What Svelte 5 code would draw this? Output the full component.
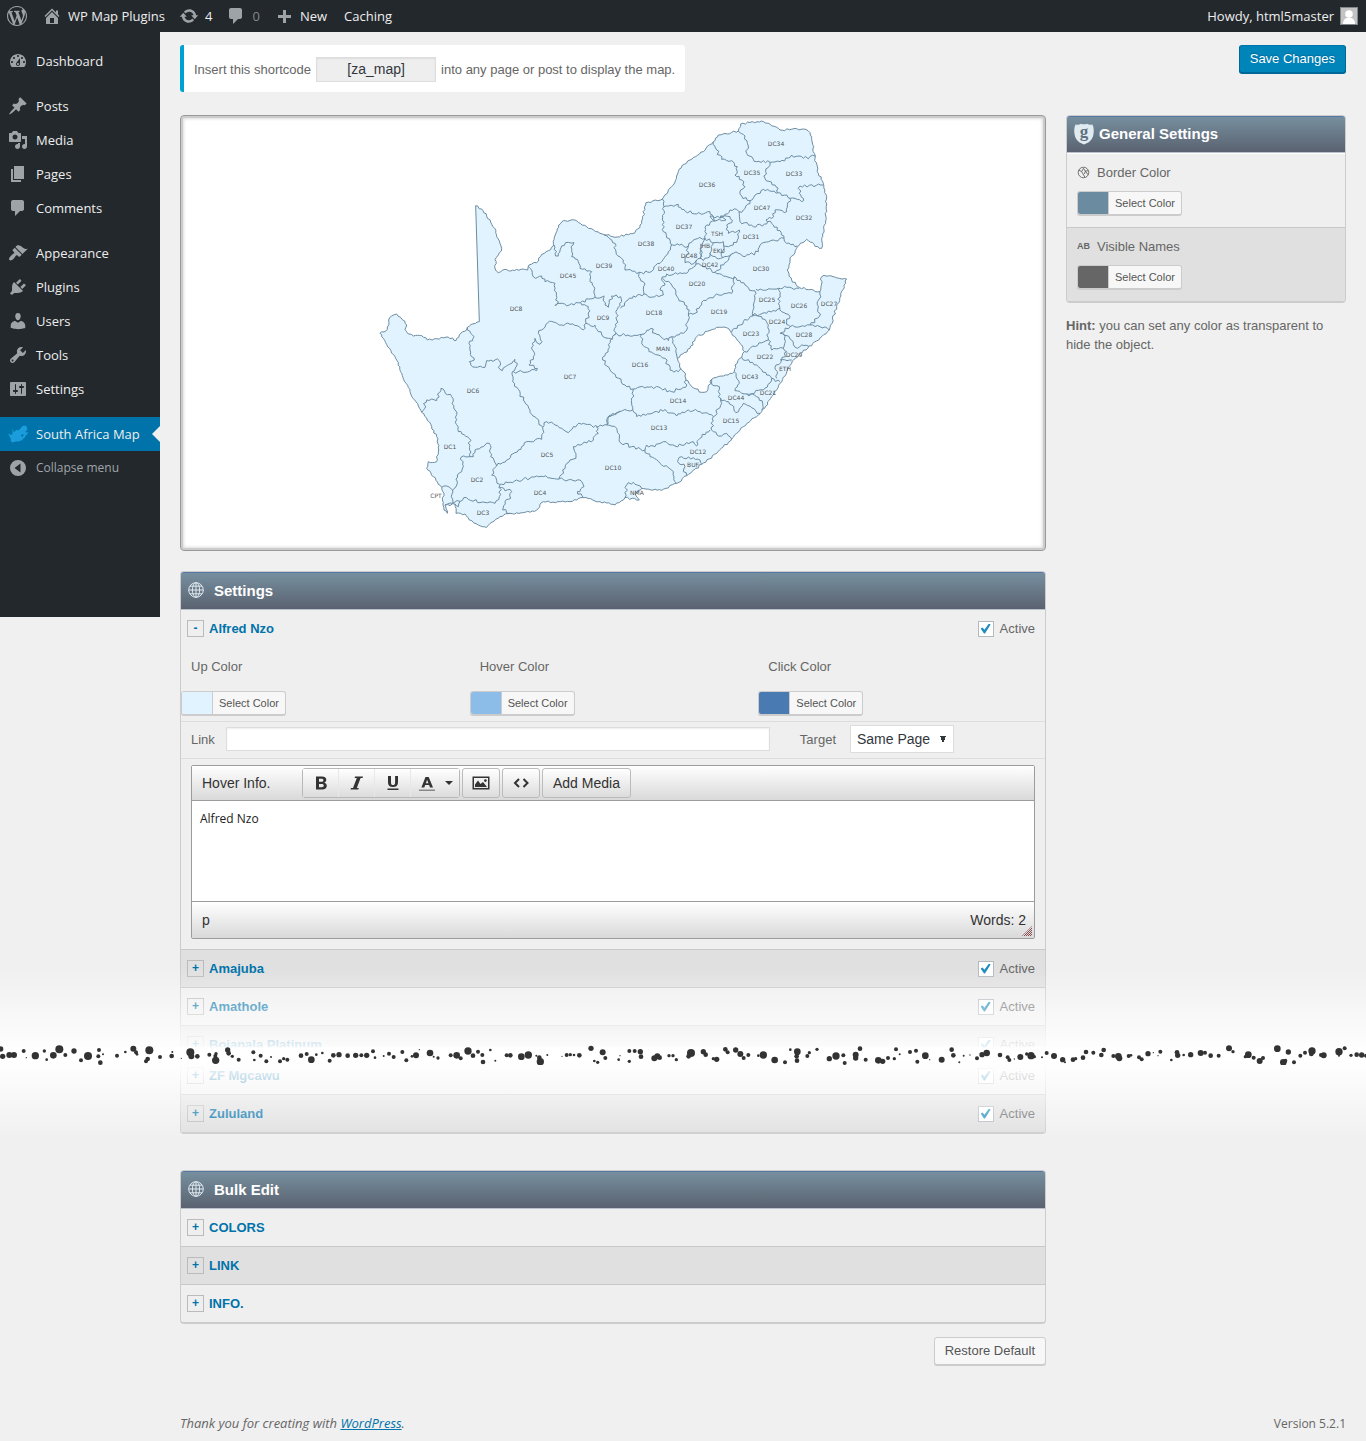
<script>
	const menu = [
		{
			label: 'Dashboard',
			icon: 'M3.76 16h12.48c1.1-1.37 1.76-3.11 1.76-5 0-4.42-3.58-8-8-8s-8 3.58-8 8c0 1.89.66 3.63 1.76 5zM10 4c.55 0 1 .45 1 1s-.45 1-1 1-1-.45-1-1 .45-1 1-1zM6 6c.55 0 1 .45 1 1s-.45 1-1 1-1-.45-1-1 .45-1 1-1zm8 0c.55 0 1 .45 1 1s-.45 1-1 1-1-.45-1-1 .45-1 1-1zm-5.37 5.55L12 7v6c0 1.1-.9 2-2 2s-2-.9-2-2c0-.57.24-1.08.63-1.45zM4 10c.55 0 1 .45 1 1s-.45 1-1 1-1-.45-1-1 .45-1 1-1zm12 0c.55 0 1 .45 1 1s-.45 1-1 1-1-.45-1-1 .45-1 1-1zm-5 3c0-.55-.45-1-1-1s-1 .45-1 1 .45 1 1 1 1-.45 1-1z'
		},
		{
			label: 'Posts',
			gap: true,
			icon: 'M10.44 3.02l1.82-1.82 6.36 6.35-1.83 1.82c-1.05-.68-2.48-.57-3.41.36l-.75.75c-.92.93-1.04 2.35-.35 3.41l-1.83 1.82-2.41-2.41-2.8 2.79c-.42.42-3.38 2.71-3.8 2.29s1.86-3.39 2.28-3.81l2.79-2.79L4.1 9.36l1.83-1.82c1.05.69 2.48.57 3.4-.36l.75-.75c.93-.92 1.05-2.35.36-3.41z'
		},
		{
			label: 'Media',
			icon: 'M13 11V4c0-.55-.45-1-1-1h-1.67L9 1H5L3.67 3H2c-.55 0-1 .45-1 1v7c0 .55.45 1 1 1h10c.55 0 1-.45 1-1zM7 4.5c1.38 0 2.5 1.12 2.5 2.5S8.38 9.5 7 9.5 4.5 8.38 4.5 7 5.62 4.5 7 4.5zM14 6h5v10.5c0 1.38-1.12 2.5-2.5 2.5S14 17.88 14 16.5s1.12-2.5 2.5-2.5c.17 0 .34.02.5.05V9h-3V6zm-4 8.05V13h2v3.5c0 1.38-1.12 2.5-2.5 2.5S7 17.88 7 16.5 8.12 14 9.5 14c.17 0 .34.02.5.05z'
		},
		{ label: 'Pages', icon: 'M6 15V2h10v13H6zm-1 1h8v2H3V5h2v11z' },
		{
			label: 'Comments',
			icon: 'M5 2h9c1.1 0 2 .9 2 2v7c0 1.1-.9 2-2 2h-2l-5 5v-5H5c-1.1 0-2-.9-2-2V4c0-1.1.9-2 2-2z'
		},
		{
			label: 'Appearance',
			gap: true,
			icon: 'M14.48 11.06L7.41 3.99l1.5-1.5c.5-.56 2.3-.47 3.51.32 1.21.8 1.43 1.28 2.91 2.1 1.18.64 2.45 1.26 4.45.85zm-.71.71L6.7 4.7 4.93 6.47c-.39.39-.39 1.02 0 1.41l1.06 1.06c.39.39.39 1.03 0 1.42-.6.6-1.43 1.11-2.21 1.69-.35.26-.7.53-1.01.84C1.43 14.23.4 16.08 1.4 17.07c.99 1 2.84-.03 4.18-1.36.31-.31.58-.66.85-1.02.57-.78 1.08-1.61 1.69-2.21.39-.39 1.02-.39 1.41 0l1.06 1.06c.39.39 1.02.39 1.41 0z'
		},
		{
			label: 'Plugins',
			icon: 'M13.11 4.36L9.87 7.6 8 5.73l3.24-3.24c.35-.34 1.05-.2 1.56.32.52.51.66 1.21.31 1.55zm-8 1.77l.91-1.12 9.01 9.01-1.19.84c-.71.71-2.63 1.16-3.82 1.16H6.14L4.9 17.26c-.59.59-1.54.59-2.12 0-.59-.58-.59-1.53 0-2.12l1.24-1.24v-3.88c0-1.13.4-3.19 1.09-3.89zm7.26 3.97l3.24-3.24c.34-.35 1.04-.21 1.55.31.52.51.66 1.21.31 1.55l-3.24 3.25z'
		},
		{
			label: 'Users',
			icon: 'M10 9.25c-2.27 0-2.73-3.44-2.73-3.44C7 4.02 7.82 2 9.97 2c2.16 0 2.98 2.02 2.71 3.81 0 0-.41 3.44-2.68 3.44zm0 2.57L12.72 10c2.39 0 4.52 2.33 4.52 4.53v2.49s-3.65 1.13-7.24 1.13c-3.65 0-7.24-1.13-7.24-1.13v-2.49c0-2.25 1.94-4.48 4.47-4.48z'
		},
		{
			label: 'Tools',
			icon: 'M16.68 9.77c-1.34 1.34-3.3 1.67-4.95.99l-5.41 6.52c-.99.99-2.59.99-3.58 0s-.99-2.59 0-3.57l6.52-5.42c-.68-1.65-.35-3.61.99-4.95 1.28-1.28 3.12-1.62 4.72-1.06l-2.89 2.89 2.82 2.82 2.86-2.87c.53 1.58.18 3.39-1.08 4.65zM3.81 16.21c.4.39 1.04.39 1.43 0 .4-.4.4-1.04 0-1.43-.39-.4-1.03-.4-1.43 0-.39.39-.39 1.03 0 1.43z'
		},
		{
			label: 'Settings',
			icon: 'M18 16V4c0-.55-.45-1-1-1H3c-.55 0-1 .45-1 1v12c0 .55.45 1 1 1h14c.55 0 1-.45 1-1zM8 11h1c.55 0 1 .45 1 1s-.45 1-1 1H8v1.5c0 .28-.22.5-.5.5s-.5-.22-.5-.5V13H6c-.55 0-1-.45-1-1s.45-1 1-1h1V5.5c0-.28.22-.5.5-.5s.5.22.5.5V11zm5-2h-1c-.55 0-1-.45-1-1s.45-1 1-1h1V5.5c0-.28.22-.5.5-.5s.5.22.5.5V7h1c.55 0 1 .45 1 1s-.45 1-1 1h-1v5.5c0 .28-.22.5-.5.5s-.5-.22-.5-.5V9z'
		}
	];

	const icons = {
		wordpress:
			'M20 10c0-5.51-4.49-10-10-10C4.48 0 0 4.49 0 10c0 5.52 4.48 10 10 10 5.51 0 10-4.48 10-10zM7.78 15.37L4.37 6.22c.55-.02 1.17-.08 1.17-.08.5-.06.44-1.13-.06-1.11 0 0-1.45.11-2.37.11-.18 0-.37 0-.58-.01C4.12 2.69 6.87 1.11 10 1.11c2.33 0 4.45.87 6.05 2.34-.68-.11-1.65.39-1.65 1.58 0 .74.45 1.36.9 2.1.35.61.55 1.36.55 2.46 0 1.49-1.4 5-1.4 5l-3.03-8.37c.54-.02.82-.17.82-.17.5-.05.44-1.25-.06-1.22 0 0-1.44.12-2.38.12-.87 0-2.33-.12-2.33-.12-.5-.03-.56 1.2-.06 1.22l.92.08 1.26 3.41zM17.41 10c.24-.64.74-1.87.43-4.25.7 1.29 1.05 2.71 1.05 4.25 0 3.29-1.73 6.24-4.4 7.78.97-2.59 1.94-5.2 2.92-7.78zM6.1 18.09C3.12 16.65 1.11 13.53 1.11 10c0-1.3.23-2.48.72-3.59C3.25 10.3 4.67 14.2 6.1 18.09zm4.03-6.63l2.58 6.98c-.86.29-1.76.45-2.71.45-.79 0-1.57-.11-2.29-.33.81-2.38 1.62-4.74 2.42-7.1z',
		home: 'M16 8.5l1.53 1.53-1.06 1.06L10 4.6l-6.47 6.49-1.06-1.06L10 2.5l4 4v-2h2v4zm-6-2.46l6 5.99V18H4v-5.97zM12 17v-5H8v5h4z',
		update:
			'M10.2 3.28c3.53 0 6.43 2.61 6.92 6h2.08l-3.5 4-3.5-4h2.32c-.45-1.97-2.21-3.45-4.32-3.45-1.45 0-2.73.71-3.54 1.78L4.95 5.66C6.23 4.2 8.11 3.28 10.2 3.28zm-.4 13.44c-3.52 0-6.43-2.61-6.92-6H.8l3.5-4c1.17 1.33 2.33 2.67 3.5 4H5.48c.45 1.97 2.21 3.45 4.32 3.45 1.45 0 2.73-.71 3.54-1.78l1.71 1.95c-1.28 1.46-3.15 2.38-5.25 2.38z',
		comment:
			'M5 2h9c1.1 0 2 .9 2 2v7c0 1.1-.9 2-2 2h-2l-5 5v-5H5c-1.1 0-2-.9-2-2V4c0-1.1.9-2 2-2z',
		plus: 'M17 9v3h-5v5H9v-5H4V9h5V4h3v5z',
		collapse: 'M10 2a8 8 0 1 0 0 16 8 8 0 0 0 0-16zM12.5 5.500v9L6.500 10z'
	};

	// The map is digitised in four sheets, three units to a pixel
	const sheets = { nw: [0, 240], ne: [690, 0], sw: [0, 720], se: [690, 480] };

	const parse = (text, [dx, dy] = [0, 0]) =>
		text.split(' ').map((pair) => {
			const [x, y] = pair.split(',').map(Number);
			return [x + dx, y + dy];
		});

	const noise = (x, y) => {
		const n = Math.sin(x * 12.9898 + y * 78.233) * 43758.5453;
		return (n - Math.floor(n)) * 2 - 1;
	};

	// Breaks long segments up so that borders look surveyed rather than ruled
	function trace(points, amount) {
		let d = 'M' + points[0].join(' ');
		for (let i = 1; i < points.length; i++) {
			const [x1, y1] = points[i - 1];
			const [x2, y2] = points[i];
			const length = Math.hypot(x2 - x1, y2 - y1);
			const steps = Math.max(1, Math.round(length / 7));
			// Surveyed straight lines stay straight
			const rough = length > 200 ? 0 : amount;
			for (let s = 1; s < steps; s++) {
				const t = s / steps;
				const off = noise(x1 + s * 7, y2 + s * 3) * rough;
				const x = x1 + (x2 - x1) * t - ((y2 - y1) / length) * off;
				const y = y1 + (y2 - y1) * t + ((x2 - x1) / length) * off;
				d += `L${x.toFixed(1)} ${y.toFixed(1)}`;
			}
			d += `L${x2} ${y2}`;
		}
		return d;
	}

	const northCoast =
		'30,670 52,658 56,630 65,618 80,612 92,622 104,633 110,645 105,658 115,672 130,678 155,677 172,690 200,686 235,681 258,692 268,675 290,660 292,652 328,635';
	const outline =
		'317,287 335,297 350,318 374,355 380,380 390,400 395,415 385,435 375,448 377,480 385,488 405,478 415,482 440,478 473,480 477,465 500,458 515,433 535,422 550,408 556,375 566,345 580,332 620,332 650,350 690,370 710,375 735,382 795,368 815,340 828,278 877,267 910,225 927,178 960,150 1000,125 1030,95 1045,75 1105,63 1112,42 1175,33 1230,60 1300,57 1320,68 1335,145 1345,190 1360,220 1370,260 1367,340 1355,385 1355,415 1348,415 1310,388 1282,410 1260,450 1252,480 1265,510 1288,532 1350,545 1355,500 1362,496 1430,507 1400,590 1378,660 1340,693 1290,730 1265,760 1230,820 1210,855 1175,905 1120,950 1085,987 1040,1030 995,1063 950,1097 920,1120 875,1141 815,1135 795,1150 808,1170 765,1163 735,1185 690,1175 640,1163 600,1175 520,1175 500,1200 460,1208 420,1210 390,1220 350,1252 325,1245 298,1230 285,1212 258,1210 255,1182 225,1185 232,1210 222,1200 217,1170 222,1150 215,1132 190,1100 170,1075 175,1055 200,1055 206,1020 200,980 185,950 155,907 120,845 95,790 75,740 40,685 30,670';
	const lesotho =
		'232,265 270,235 290,200 350,172 380,173 395,190 425,225 433,245 425,262 405,285 403,305 370,318 335,328 320,365 305,367 275,350 258,330 257,312 245,300 235,275 232,265';

	const country =
		trace(parse(northCoast), 3) +
		trace(parse(outline), 3).replace('M', 'L') +
		'Z' +
		trace(parse(lesotho, sheets.se), 3) +
		'Z';

	const borders = {
		nw: [
			'292,412 302,430 312,440 297,460 300,480 313,510 298,515 302,525 345,532 350,512 375,510 388,512',
			'477,525 490,500 487,460 495,445 510,463 516,455 505,430 538,394 575,405 600,403 640,420 648,400',
			'475,230 497,265 515,258 525,275 555,280 557,330 565,335 555,347 570,340 598,345 632,338',
			'552,165 557,198 565,198 575,168 595,157 612,158 603,170 605,200 625,215 630,235 665,245 660,275 672,290 675,322',
			'632,338 675,322 703,318',
			'632,338 655,350 655,375 648,400 670,410 675,405 685,425 715,445 728,448'
		],
		ne: [
			'12,375 45,400 48,425 70,450 75,480 118,487 150,487 180,460 205,425 215,405',
			'118,487 120,505 130,515 132,552',
			'187,267 192,290 187,330 190,365 218,405 265,408 285,388 315,385',
			'192,290 235,283 245,298 290,312 330,305 345,333 320,345 315,385 305,410 300,445 290,450 288,462',
			'265,408 262,435 255,458 280,462 290,450',
			'340,95 350,120 365,148 395,152 412,170 405,195 425,210 435,230 422,240 425,258 450,272',
			'415,63 435,78 442,100 440,130 470,155 510,157 540,155 575,135 610,145 645,138',
			'510,157 497,185 495,205 525,225 535,248 570,265 605,275 610,265 598,250 600,228 670,225',
			'450,272 490,238 535,248',
			'450,272 430,300 417,305 420,335 460,350 500,342 498,330 520,345 540,362 552,385 560,400 592,408',
			'570,265 560,305 525,300 515,325 498,330',
			'552,385 520,390 485,400 475,425 435,440 415,430 395,432 380,455 345,487',
			'345,333 330,318 360,325 390,300 410,298 417,305',
			'345,333 378,330 360,322 390,320 395,338 380,345 385,370 418,360 415,385 400,405 370,408',
			'315,385 345,398 370,395 368,443 395,432',
			'340,398 330,430 350,445 368,443',
			'303,420 300,445 310,452 330,440 330,430',
			'288,462 310,470 345,487 370,498 405,503',
			'288,462 260,490 200,492 185,510 195,525 180,540 190,555 150,562 132,552'
		],
		sw: [
			'388,32 390,58 397,62 435,28 440,48 427,65 428,95 445,118 460,150 480,180 500,205 518,232',
			'430,65 500,62 502,55 477,45',
			'518,232 530,215 555,225 575,235 595,248 610,230 640,220 670,232 712,225 740,235 748,275',
			'712,225 715,200 750,183',
			'678,230 685,250 670,270 610,290 618,325 600,330 567,387',
			'518,232 515,268 470,275 445,300 410,330 380,348 362,320 358,280 345,285 315,300 310,320 300,320',
			'155,187 170,150 200,152 213,115 245,140 255,180 265,245 298,265 300,320',
			'300,320 275,320 275,365 262,375 262,400 248,420 248,460',
			'215,412 230,408 248,420',
			'225,465 248,460 290,443 330,458 375,460 388,440 390,405',
			'255,462 265,470 270,455',
			'380,348 365,375 388,403 440,390 520,380 567,387 630,390 642,410 622,425 640,443',
			'388,412 425,425 422,445 405,455 398,480 420,490'
		],
		se: [
			'13,80 15,105 25,112 35,78 62,80 65,95 52,118 50,150 43,195 38,205',
			'62,115 100,78 132,72',
			'188,25 215,45 235,85 268,120 265,135',
			'265,135 285,130 305,97 350,72 395,70 403,20 435,45 468,70 460,105 458,138',
			'265,135 260,180 230,195 215,200 205,212 165,190 152,175 125,193 43,195',
			'125,193 125,220 160,250 195,265 210,300 235,305 243,295',
			'215,200 225,230 230,255 232,265',
			'38,205 8,270 40,310 75,345 100,357 155,350 215,365 257,352 258,330',
			'100,357 98,420 60,425 25,440 22,465',
			'98,420 110,440 150,432 195,418 230,438 265,420 300,425 340,440',
			'335,328 335,343 358,350 355,380 365,400 340,440 335,480 365,498 380,490 395,507',
			'362,385 395,405 408,428 430,400 480,430',
			'403,305 418,340 405,362 425,370 440,372 470,380 488,400 485,420',
			'440,372 490,360 515,325',
			'425,262 470,285 500,315 515,325 540,335',
			'433,245 505,210 505,165 485,140 458,138 430,155 395,187',
			'505,210 515,240 550,235 560,245 545,270 528,285 530,325',
			'540,270 575,270',
			'550,190 575,210 592,235 605,225 625,228',
			'468,58 500,60 535,55 560,52 598,55',
			'458,135 500,130 540,115',
			'535,55 540,75 535,100 545,125 570,140 560,155 570,170 540,190 555,200 550,235',
			'570,170 600,170 630,165 660,170 688,180',
			'660,65 655,110 658,140 630,165',
			'58,515 95,530 135,540 140,525 165,530 190,515 225,528 280,515 290,528 300,505 330,480',
			'135,540 150,560 180,580 215,600 230,640',
			'305,583 300,570 245,560 233,575 255,590 250,605 260,617',
			'75,683 80,645 100,637 125,655'
		]
	};

	const borderPath = Object.entries(borders)
		.flatMap(([sheet, lines]) => lines.map((line) => trace(parse(line, sheets[sheet]), 5)))
		.join('');

	const districts = `DC34 406 34,DC35 382 63,DC33 424 64,DC36 337 75,DC47 392 98,DC32 434 108,DC37 314 117,TSH 347 124,DC31 381 127,JHB 335 136,EKU 349 141,DC38 276 134,DC48 319 146,DC42 340 155,DC39 234 156,DC40 296 159,DC30 391 159,DC45 198 166,DC20 327 174,DC8 146 199,DC25 397 190,DC26 429 196,DC27 459 194,DC9 233 208,DC18 284 203,DC19 349 202,DC24 407 212,DC23 381 224,DC28 434 225,MAN 293 239,DC29 424 245,DC22 395 247,DC16 270 255,ETH 415 259,DC7 200 267,DC43 380 267,DC21 398 283,DC44 366 288,DC14 308 291,DC6 103 281,DC15 361 311,DC13 289 318,DC1 80 337,DC12 328 342,DC5 177 345,BUF 323 355,DC10 243 358,DC2 107 370,CPT 66 386,DC4 170 383,NMA 267 383,DC3 113 403`
		.split(',')
		.map((entry) => entry.split(' '))
		.map(([code, x, y]) => ({ code, x: Number(x), y: Number(y) }));

	// Ink drops along the tear: x, offset from the middle, radius
	const tear = [
		[
			0,
			'2,-18,8 8,4,8 28,0,9 42,0,9 71,-12,6 79,8,2 106,2,11 133,-12,5 140,14,4 160,1,10 178,-17,12 196,0,6 222,-12,8 243,16,6 264,3,12 297,-15,6 295,4,6 309,-2,3 301,23,7 351,2,6 376,-9,4 400,-19,9 408,-8,6 411,-2,4 448,-14,12 443,12,7 438,19,6 480,6,6 515,3,7 517,-9,3 544,10,2 571,-8,12 574,4,9 592,4,7 628,-1,6 648,-4,5 646,3,6 647,16,11 683,-15,8 686,-5,7 697,4,5 716,14,6 760,-8,6 763,15,4 782,2,6 799,19,6 813,6,3 840,19,6 851,11,5 862,14,6 903,2,7 920,-3,6 934,14,10 949,-1,4 967,-6,4 989,17,6 1000,1,7 1017,-1,8 1043,2,7 1067,1,8 1084,1,6 1100,1,8 1119,-11,6 1125,8,4 1151,3,3 1167,-4,6 1181,6,6 1207,-9,6 1219,16,6 1236,4,4 1248,1,9 1258,-16,2 1290,-6,10 1301,5,3 1314,9,5 1352,1,6 1370,1,10'
		],
		[
			1350,
			'32,10,6 54,-12,11 69,2,7 84,-10,6 97,0,6 99,21,7 121,-15,4 136,17,3 170,1,6 181,1,7 214,5,10 235,0,11 259,2,3 268,8,7 271,20,11 292,0,3 336,4,2 350,0,6 361,-1,5 372,0,4 388,1,7 423,-20,8 458,-8,9 466,9,6 433,18,4 443,22,5 506,14,4 510,2,2 538,-12,6 554,-12,6 571,-10,8 573,5,7 538,19,5 613,10,9 622,4,9 629,8,7 657,2,5 669,2,5 679,14,5 723,-6,12 716,4,7 760,-10,8 767,-1,7 790,11,5 800,13,8 826,-17,7 833,-8,6 857,-15,8 871,-3,9 881,9,6 895,0,6 925,2,4 940,0,11 974,15,10 1005,22,6 1021,-16,4 1042,-10,10 1040,4,7 1041,17,7 1078,-7,5 1072,3,6 1101,-17,5 1138,11,8 1158,3,11 1180,1,6 1184,24,6 1217,-1,9 1217,9,8 1230,-19,7 1247,14,6 1285,16,10 1298,19,8 1314,9,6 1333,11,5 1338,-17,6 1349,-2,3'
		],
		[
			2700,
			'30,-9,6 48,-13,6 52,20,6 76,2,10 89,14,2 125,14,9 155,-16,7 160,1,7 178,22,3 191,2,3 210,0,2 231,10,6 246,-1,8 260,-6,10 300,0,7 323,7,6 328,15,6 343,12,2 361,6,9 380,-3,5 393,2,11 403,5,5 426,7,3 440,-6,6 462,3,9 488,14,8 495,22,3 519,14,7 527,11,5 549,8,7 558,-9,7 580,-7,6 604,0,7 611,-15,7 640,3,6 655,4,10 658,10,9 686,3,6 693,1,4 717,7,6 725,13,6 744,-4,8 760,-7,2 774,2,2 781,-10,6 814,15,4 831,-8,7 833,1,8 851,0,4 872,-1,8 902,-6,9 915,-7,6 932,2,7 956,2,6 987,-20,9 999,-10,5 1036,5,5 1045,-1,10 1061,8,6 1079,18,9 1089,9,6 1132,-19,10 1165,-9,8 1150,22,10 1156,17,6 1182,22,6 1201,2,6 1215,-7,6 1236,-12,11 1234,-3,7 1263,0,6 1271,1,9 1317,-10,11 1334,-20,6 1317,2,3 1353,1,5 1370,-1,7 1385,0,8 1398,2,6'
		]
	].flatMap(([start, drops]) =>
		drops.split(' ').map((drop) => {
			const [x, y, r] = drop.split(',').map(Number);
			return { x: x + start, y, r };
		})
	);

	const stateColors = [
		{ label: 'Up Color', color: '#e0f3ff' },
		{ label: 'Hover Color', color: '#8cbde9' },
		{ label: 'Click Color', color: '#4a7ab2' }
	];

	let active = $state({
		'Alfred Nzo': true,
		Amajuba: true,
		Amathole: true,
		'Bojanala Platinum': true,
		'ZF Mgcawu': true,
		Zululand: true
	});
	let link = $state('');
	let target = $state('same');
	let info = $state('Alfred Nzo');
	let words = $derived(info.trim() ? info.trim().split(/\s+/).length : 0);
</script>

{#snippet glyph(d)}
	<svg class="glyph" viewBox="0 0 20 20" aria-hidden="true"><path {d} fill-rule="evenodd" /></svg>
{/snippet}

{#snippet globe()}
	<svg class="globe" viewBox="0 0 16 16" aria-hidden="true">
		<circle cx="8" cy="8" r="7.300" />
		<ellipse cx="8" cy="8" rx="3.600" ry="7.300" />
		<path d="M8 .7v14.600M.7 8h14.600M2 4.200h12M2 11.800h12" />
	</svg>
{/snippet}

{#snippet picker(color, name)}
	<button class="picker" type="button" aria-label="{name}: Select Color">
		<span class="swatch" style="background: {color}"></span>
		<span class="picker-text">Select Color</span>
	</button>
{/snippet}

{#snippet region(name, open)}
	<div class="row-head">
		<button class="toggle" type="button" aria-expanded={open}>
			<span class="sign">{open ? '-' : '+'}</span>{name}
		</button>
		<label class="active">
			<input type="checkbox" bind:checked={active[name]} />
			Active
		</label>
	</div>
{/snippet}

<div class="page">
	<header class="adminbar">
		<a class="logo" href="#about" aria-label="About WordPress">{@render glyph(icons.wordpress)}</a>
		<a href="#site">{@render glyph(icons.home)}WP Map Plugins</a>
		<a href="#updates">{@render glyph(icons.update)}4</a>
		<a class="quiet" href="#comments">{@render glyph(icons.comment)}0</a>
		<a href="#new">{@render glyph(icons.plus)}New</a>
		<a class="plain" href="#caching">Caching</a>
		<a class="account" href="#profile">
			Howdy, html5master
			<svg class="avatar" viewBox="0 0 18 18" aria-hidden="true">
				<rect width="18" height="18" fill="#c3c3c3" />
				<circle cx="9" cy="7" r="3.800" />
				<path d="M3 17c0-4 2-5.500 4-6h4c2 .5 4 2 4 6z" />
				<rect class="frame" x=".5" y=".5" width="17" height="17" />
			</svg>
		</a>
	</header>

	<div class="body">
		<nav class="sidebar" aria-label="Main menu">
			<ul>
				{#each menu as item (item.label)}
					<li class:gap={item.gap}>
						<a href="#{item.label.toLowerCase()}">{@render glyph(item.icon)}{item.label}</a>
					</li>
				{/each}
				<li class="gap current">
					<a href="#map">
						<svg class="glyph map-icon" viewBox="0 0 1430 1280" aria-hidden="true">
							<path d={country} fill-rule="evenodd" />
						</svg>South Africa Map
					</a>
				</li>
			</ul>
			<button class="collapse" type="button">{@render glyph(icons.collapse)}Collapse menu</button>
		</nav>

		<main>
			<div class="top">
				<div class="notice">
					<label for="shortcode">Insert this shortcode</label>
					<input id="shortcode" value="[za_map]" readonly />
					<span>into any page or post to display the map.</span>
				</div>
				<button class="primary" type="button">Save Changes</button>
			</div>

			<div class="columns">
				<div class="left">
					<div class="map">
						<svg viewBox="-186 9 858 428" role="img" aria-label="South Africa districts">
							<g transform="scale(.33333)">
								<path class="land" d={country} />
								<path class="border" d={borderPath} />
							</g>
							{#each districts as district (district.code)}
								<text x={district.x} y={district.y + 2}>{district.code}</text>
							{/each}
						</svg>
					</div>

					<section class="panel">
						<h2>{@render globe()}Settings</h2>
						<div class="row">
							{@render region('Alfred Nzo', true)}
							<div class="colors">
								{#each stateColors as item (item.label)}
									<div>
										<p>{item.label}</p>
										{@render picker(item.color, item.label)}
									</div>
								{/each}
							</div>
							<div class="link-row">
								<label for="link">Link</label>
								<input id="link" type="text" bind:value={link} />
								<label class="target" for="target">Target</label>
								<select id="target" bind:value={target}>
									<option value="same">Same Page</option>
									<option value="new">New Page</option>
								</select>
							</div>
							<div class="editor">
								<div class="toolbar">
									<label for="info">Hover Info.</label>
									<div class="group">
										<button type="button" aria-label="Bold">
											<svg viewBox="0 0 20 20"
												><path
													fill-rule="evenodd"
													d="M5 3.500h6c3 0 4.300 1.300 4.300 3.300 0 1.500-.8 2.500-2.100 2.900 1.700.3 2.600 1.500 2.600 3.100 0 2.400-1.700 3.700-4.600 3.700H5zM8 5.700v3h2.400c1.300 0 2-.5 2-1.500s-.7-1.500-2-1.500zm0 5.200v3.300h2.700c1.400 0 2.100-.6 2.100-1.700s-.7-1.600-2.100-1.600z"
												/></svg
											>
										</button>
										<button type="button" aria-label="Italic">
											<svg viewBox="0 0 20 20"
												><path d="M8 3.500h8l-.4 1.600h-2l-3.800 9.800h2l-.5 1.600H3.500l.5-1.600h2L9.800 5.100H7.600z" /></svg
											>
										</button>
										<button type="button" aria-label="Underline">
											<svg viewBox="0 0 20 20"
												><path
													d="M5 3h3v6.500c0 1.800.7 2.600 2 2.600s2.100-.8 2.100-2.600V3H15v6.500c0 3-1.900 4.600-5 4.600s-5-1.600-5-4.600zM4.500 15.500h11v1.500h-11z"
												/></svg
											>
										</button>
										<button class="wide" type="button" aria-label="Text color">
											<svg viewBox="0 0 20 20"
												><path
													fill-rule="evenodd"
													d="M8.500 4h3.200L16 14.500h-3l-.9-2.400H8.200l-.9 2.400H4.400zm1.600 2.800L8.900 10.200h2.500z"
												/><path class="underline" d="M2 16.500h16v1.500H2z" /></svg
											>
											<span class="caret"></span>
										</button>
									</div>
									<button class="single" type="button" aria-label="Insert image">
										<svg viewBox="0 0 20 20"
											><path
												fill-rule="evenodd"
												d="M1.500 3.500h17v13h-17zM3 5v10h14V5zM4 14l0-2.500 3-4 2.500 3.500L12 9l4 5zM14.400 6.200a1.400 1.400 0 1 1 0 2.800 1.400 1.400 0 0 1 0-2.800z"
											/></svg
										>
									</button>
									<button class="single" type="button" aria-label="Source code">
										<svg viewBox="0 0 20 20"
											><path class="line" d="M8 6 4 10l4 4M12.500 6l4 4-4 4" /></svg
										>
									</button>
									<button class="media" type="button">Add Media</button>
								</div>
								<textarea id="info" bind:value={info}></textarea>
								<div class="status">
									<span>p</span>
									<span>Words: {words}</span>
									<span class="grip"></span>
								</div>
							</div>
						</div>
						<div class="row odd">{@render region('Amajuba', false)}</div>
						<div class="row">{@render region('Amathole', false)}</div>
						<div class="row odd cut">{@render region('Bojanala Platinum', false)}</div>
						<div class="tear">
							<svg viewBox="0 0 4098 60" aria-hidden="true">
								{#each tear as drop}
									<circle cx={drop.x} cy={drop.y + 30} r={drop.r} />
								{/each}
							</svg>
						</div>
						<div class="row first">{@render region('ZF Mgcawu', false)}</div>
						<div class="row odd">{@render region('Zululand', false)}</div>
					</section>

					<section class="panel bulk">
						<h2>{@render globe()}Bulk Edit</h2>
						{#each ['COLORS', 'LINK', 'INFO.'] as name, i (name)}
							<div class="row" class:odd={i % 2}>
								<div class="row-head">
									<button class="toggle" type="button" aria-expanded="false">
										<span class="sign">+</span>{name}
									</button>
								</div>
							</div>
						{/each}
					</section>

					<div class="actions">
						<button class="secondary" type="button">Restore Default</button>
					</div>
				</div>

				<aside>
					<section class="panel general">
						<h2>
							<svg class="shield" viewBox="0 0 20 22" aria-hidden="true">
								<path d="M1.500 1.500C4 2.200 5.500 1.700 7 .8c2 .7 4 .7 6 0 1.500.9 3 1.400 5.500.7C20 5 20 8 19.400 11.500 18.500 17 14.500 20 10 21.500 5.500 20 1.500 17 .6 11.500 0 8 0 5 1.500 1.500z" />
								<text x="10" y="14">g</text>
							</svg>General Settings
						</h2>
						<div class="setting">
							<p>
								<svg viewBox="0 0 14 14" aria-hidden="true">
									<circle cx="7" cy="7" r="5.700" />
									<path d="M2 4.500l3 1.500 2-3.500M5 6l3.500 6M7 2.500l2 3 3-.5M9 5.500l-1 3M9 5.500l3 4" />
								</svg>Border Color
							</p>
							{@render picker('#6b8ba0', 'Border Color')}
						</div>
						<div class="setting odd">
							<p><b>AB</b>Visible Names</p>
							{@render picker('#666666', 'Visible Names')}
						</div>
					</section>
					<p class="hint"><b>Hint:</b> you can set any color as transparent to hide the object.</p>
				</aside>
			</div>

			<footer>
				<i>Thank you for creating with <a href="#wordpress">WordPress</a>.</i>
				<span>Version 5.2.1</span>
			</footer>
		</main>
	</div>
</div>

<style>
	:global(body) {
		background: #f0f0f0;
		color: #666;
		font: 13px/19px 'Liberation Sans', Arial, sans-serif;
	}

	* {
		box-sizing: border-box;
	}

	p,
	h2,
	ul {
		margin: 0;
		padding: 0;
	}

	button,
	input,
	select,
	textarea {
		font: inherit;
		margin: 0;
	}

	button {
		cursor: pointer;
	}

	.page {
		position: relative;
	}

	.glyph {
		width: 20px;
		height: 20px;
		flex: none;
		fill: #9ea3a8;
	}

	/* Admin bar */
	.adminbar {
		display: flex;
		height: 32px;
		background: #23282d;
		font: 13px/32px 'Open Sans', 'Segoe UI', sans-serif;
	}

	.adminbar a {
		display: flex;
		align-items: center;
		gap: 6px;
		padding: 0 7px;
		color: #eee;
		text-decoration: none;
	}

	.adminbar .logo {
		padding-right: 8px;
	}

	.adminbar .quiet {
		color: #82878c;
	}

	.adminbar .plain {
		padding: 0 10px;
	}

	.adminbar .account {
		margin-left: auto;
		padding-right: 8px;
	}

	.avatar {
		width: 18px;
		height: 18px;
		fill: #fff;
	}

	.avatar .frame {
		fill: none;
		stroke: #82878c;
	}

	.body {
		display: flex;
		align-items: flex-start;
	}

	/* Sidebar */
	.sidebar {
		flex: none;
		width: 160px;
		padding: 12px 0 132px;
		background: #23282d;
		font: 13px/34px 'Open Sans', 'Segoe UI', sans-serif;
	}

	.sidebar ul {
		list-style: none;
	}

	.sidebar a,
	.collapse {
		display: flex;
		align-items: center;
		gap: 8px;
		width: 100%;
		height: 34px;
		padding: 0 8px;
		color: #eee;
		text-decoration: none;
		white-space: nowrap;
	}

	.collapse {
		border: 0;
		background: none;
		color: #a0a5aa;
		font-size: 12px;
	}

	.gap {
		margin-top: 11px;
	}

	.current {
		position: relative;
		background: #0073aa;
	}

	.current::after {
		content: '';
		position: absolute;
		right: 0;
		top: 9px;
		border: 8px solid transparent;
		border-left: 0;
		border-right-color: #f0f0f0;
	}

	.map-icon {
		fill: #1b9ddb;
	}

	main {
		flex: 1;
		min-width: 0;
		padding: 13px 20px 0;
	}

	.top {
		display: flex;
		justify-content: space-between;
		align-items: flex-start;
		margin-bottom: 23px;
	}

	.notice {
		display: flex;
		align-items: center;
		gap: 5px;
		height: 47px;
		padding: 1px 10px 0;
		border-left: 4px solid #00a0d2;
		border-radius: 3px;
		background: #fff;
	}

	.notice input {
		width: 120px;
		height: 25px;
		border: 1px solid #ddd;
		background: #eee;
		box-shadow: inset 0 1px 2px rgba(0, 0, 0, 0.07);
		color: #32373c;
		font-size: 14px;
		text-align: center;
	}

	.primary,
	.secondary {
		height: 28px;
		padding: 0 10px 2px;
		border: 1px solid #ccc;
		border-radius: 3px;
		background: #f7f7f7;
		box-shadow: 0 1px 0 #ccc;
		color: #555;
	}

	.primary {
		border-color: #0073aa #006799 #006799;
		background: #0085ba;
		box-shadow: 0 1px 0 #006799;
		color: #fff;
		text-shadow: 0 -1px 1px #006799;
	}

	.columns {
		display: grid;
		grid-template-columns: minmax(0, 1fr) 280px;
		gap: 20px;
	}

	/* Map */
	.map {
		padding: 3px;
		border: 1px solid #999;
		border-radius: 4px;
		background: #fff;
		box-shadow: inset 0 0 0 2px #ccc, inset 0 0 3px 3px #ddd;
	}

	.map svg {
		display: block;
		width: 100%;
	}

	.land {
		fill: #e0f3ff;
		fill-rule: evenodd;
		stroke: #6b8ba0;
		stroke-width: 3;
	}

	.border {
		fill: none;
		stroke: #6b8ba0;
		stroke-width: 3;
		stroke-linejoin: round;
	}

	.map text {
		fill: #555;
		font: 6px 'DejaVu Sans', Verdana, sans-serif;
		text-anchor: middle;
	}

	/* Panels */
	.panel {
		margin-top: 20px;
		border: 1px solid #ccc;
		border-bottom-width: 2px;
		border-radius: 4px;
		background: #efefef;
	}

	.panel h2 {
		display: flex;
		align-items: center;
		gap: 10px;
		height: 38px;
		padding: 0 7px 2px;
		border-top: 1px solid #5877a3;
		border-bottom: 1px solid #b9c2cc;
		border-radius: 3px 3px 0 0;
		background: linear-gradient(#768f9f, #5a6270);
		color: #fff;
		font-size: 15px;
	}

	.globe {
		width: 16px;
		height: 16px;
		fill: none;
		stroke: #dfe8ee;
	}

	.row {
		border-top: 1px solid #c8c8c8;
	}

	.panel h2 + .row {
		border-top: 0;
	}

	.odd {
		background: #e0e0e0;
	}

	.row-head {
		display: flex;
		align-items: center;
		justify-content: space-between;
		height: 37px;
		padding: 0 10px 0 6px;
	}

	.cut {
		height: 31px;
		overflow: hidden;
	}

	.toggle {
		display: flex;
		align-items: center;
		gap: 5px;
		padding: 0;
		border: 0;
		background: none;
		color: #0073aa;
		font-weight: bold;
	}

	.sign {
		width: 17px;
		height: 17px;
		border: 1px solid #bbb;
		font-size: 12px;
		line-height: 15px;
		text-align: center;
	}

	.active {
		display: flex;
		align-items: center;
		gap: 6px;
	}

	.active input {
		position: relative;
		width: 16px;
		height: 16px;
		appearance: none;
		border: 1px solid #b4b9be;
		background: #fff;
	}

	.active input:checked::after {
		content: '';
		position: absolute;
		inset: 2px;
		background: #1e8cbe;
		clip-path: polygon(0 50%, 20% 40%, 38% 62%, 84% 0, 100% 10%, 44% 100%, 34% 100%);
	}

	.colors {
		display: grid;
		grid-template-columns: repeat(3, 1fr);
		gap: 2px;
		padding: 10px 0 5px;
	}

	.colors p {
		margin-bottom: 15px;
		padding-left: 10px;
	}

	.picker {
		display: flex;
		height: 25px;
		padding: 0;
		border: 1px solid #ccc;
		border-bottom-width: 2px;
		border-radius: 3px;
		background: #f7f7f7;
		color: #555;
		font-size: 11px;
		line-height: 22px;
	}

	.swatch {
		width: 30px;
		height: 22px;
		border-radius: 2px 0 0 2px;
	}

	.picker-text {
		padding: 0 6px;
		border-left: 1px solid #ccc;
	}

	.link-row {
		display: flex;
		align-items: center;
		height: 38px;
		padding: 0 10px 2px;
		border-top: 1px solid #ddd;
		border-bottom: 1px solid #ddd;
	}

	.link-row input {
		flex: 0 1 544px;
		min-width: 0;
		height: 24px;
		margin-left: 11px;
		border: 1px solid #ddd;
		background: #fff;
		box-shadow: inset 0 1px 2px rgba(0, 0, 0, 0.07);
	}

	.target {
		margin: 0 14px 0 30px;
	}

	.link-row select {
		width: 104px;
		height: 28px;
		padding: 0 6px;
		appearance: none;
		border: 1px solid #ddd;
		background:
			linear-gradient(to bottom right, #32373c 50%, transparent 50%) right 7px top 10px / 3px 7px no-repeat,
			linear-gradient(to bottom left, #32373c 50%, transparent 50%) right 10px top 10px / 3px 7px no-repeat,
			#fff;
		color: #32373c;
		font-size: 14px;
	}

	/* Editor */
	.editor {
		margin: 6px 10px 10px;
		border: 1px solid #9c9c9c;
		border-radius: 2px;
		color: #333;
		font-size: 14px;
	}

	.toolbar {
		display: flex;
		align-items: center;
		gap: 2px;
		height: 35px;
		padding: 0 10px;
		border-bottom: 1px solid #9c9c9c;
		background: linear-gradient(#fff, #d9d9d9);
	}

	.toolbar label {
		width: 98px;
	}

	.group {
		display: flex;
		border: 1px solid #b8b8b8;
		border-radius: 3px;
	}

	.toolbar button {
		display: flex;
		align-items: center;
		justify-content: center;
		width: 36px;
		height: 28px;
		padding: 0;
		border: 0;
		border-right: 1px solid #e8e8e8;
		background: linear-gradient(#fff, #dcdcdc);
		color: #333;
	}

	.toolbar .wide {
		gap: 8px;
		width: 48px;
		border-right: 0;
	}

	.toolbar .single,
	.toolbar .media {
		width: 38px;
		height: 30px;
		border: 1px solid #bbb;
		border-radius: 3px;
	}

	.toolbar .media {
		width: auto;
		padding: 0 10px;
	}

	.toolbar svg {
		flex: none;
		width: 20px;
		height: 20px;
		fill: #333;
	}

	.toolbar .underline {
		fill: #888;
	}

	.toolbar .line {
		fill: none;
		stroke: #333;
		stroke-width: 2;
	}

	.caret {
		border: 4px solid transparent;
		border-top-color: #333;
		border-bottom: 0;
	}

	textarea {
		display: block;
		width: 100%;
		height: 100px;
		padding: 8px;
		border: 0;
		resize: none;
		background: #fff;
		color: #222;
		font: 12px/19px 'Open Sans', 'Segoe UI', sans-serif;
	}

	.status {
		position: relative;
		display: flex;
		align-items: center;
		justify-content: space-between;
		height: 37px;
		padding: 0 8px 0 10px;
		border-top: 1px solid #9c9c9c;
		background: linear-gradient(#fff, #d9d9d9);
	}

	.grip {
		position: absolute;
		right: 2px;
		bottom: 2px;
		width: 10px;
		height: 10px;
		background: repeating-conic-gradient(#8a4a50 0 25%, transparent 0 50%) 0 0 / 2px 2px;
		clip-path: polygon(100% 0, 100% 100%, 0 100%);
	}

	/* Tear across the whole page where rows are left out */
	.tear {
		position: absolute;
		z-index: 1;
		left: 0;
		right: 0;
		height: 170px;
		margin-top: -87px;
		padding-top: 76px;
		background: linear-gradient(
			rgba(255, 255, 255, 0),
			rgba(255, 255, 255, 0.42) 38px,
			rgba(255, 255, 255, 0.88) 77px,
			#fff 79px,
			#fff 92px,
			rgba(255, 255, 255, 0.84) 104px,
			rgba(255, 255, 255, 0)
		);
		pointer-events: none;
	}

	.tear svg {
		display: block;
		width: 100%;
		fill: #333;
	}

	.first {
		border-top-color: transparent;
	}

	.bulk {
		margin-top: 36px;
	}

	.actions {
		display: flex;
		justify-content: flex-end;
		margin-top: 13px;
	}

	/* Right column */
	.general {
		margin-top: 0;
	}

	.general h2 {
		gap: 5px;
		height: 37px;
	}

	.shield {
		width: 20px;
		height: 22px;
		fill: #dfeaf1;
	}

	.shield text {
		fill: #5f7180;
		font: bold 17px 'Liberation Serif', 'Times New Roman', serif;
		text-anchor: middle;
	}

	.setting {
		height: 74px;
		padding: 9px 10px;
		border-top: 1px solid #fff;
	}

	.setting + .setting {
		border-top-color: #c8c8c8;
	}

	.setting p {
		display: flex;
		align-items: center;
		gap: 7px;
		margin-bottom: 9px;
	}

	.setting svg {
		width: 13px;
		height: 13px;
		fill: none;
		stroke: #666;
	}

	.setting b {
		width: 13px;
		font-size: 9px;
	}

	.hint {
		margin-top: 13px;
	}

	footer {
		display: flex;
		justify-content: space-between;
		margin: 49px 0 0;
		padding-bottom: 8px;
		font: 12px/19px 'Open Sans', 'Segoe UI', sans-serif;
	}

	footer i {
		font-size: 13px;
	}

	footer a {
		color: #0073aa;
	}
</style>
